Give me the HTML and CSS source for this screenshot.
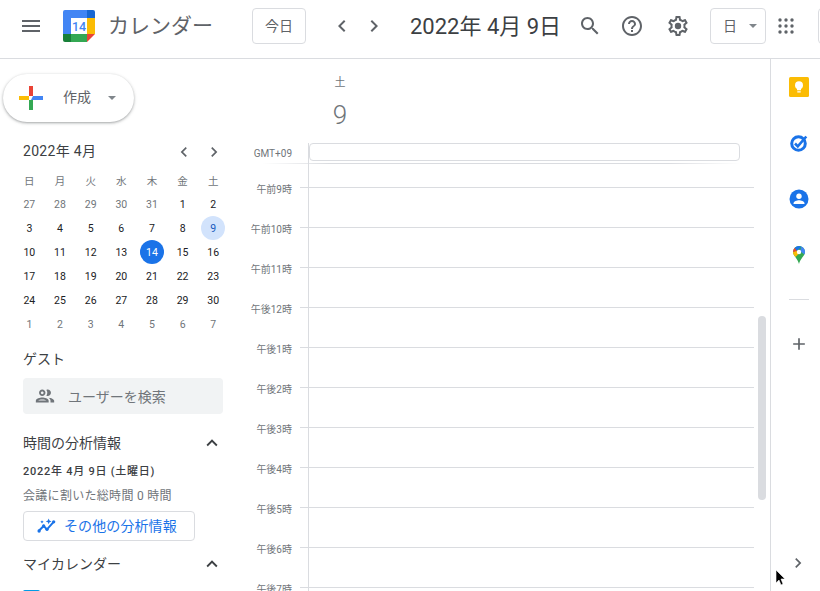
FILE: index.html
```html
<!DOCTYPE html>
<html lang="ja">
<head>
  <meta charset="UTF-8" />
  <title>カレンダー</title>
  <link rel="stylesheet" href="styles.css">
</head>
<body>

<header class="topbar">
  <svg class="icon menu-icon" viewBox="0 0 24 24"><path d="M3 18h18v-2H3v2zm0-5h18v-2H3v2zm0-7v2h18V6H3z"/></svg>
  <svg class="logo" viewBox="0 0 32 32">
    <path fill="#4285f4" d="M2 0h22v8H8v16H0V2a2 2 0 0 1 2-2z"/>
    <path fill="#1967d2" d="M24 0h6a2 2 0 0 1 2 2v6h-8z"/>
    <path fill="#fbbc04" d="M24 8h8v16h-8z"/>
    <path fill="#34a853" d="M8 24h16v8H8z"/>
    <path fill="#188038" d="M0 24h8v8H2a2 2 0 0 1-2-2z"/>
    <path fill="#ea4335" d="M24 24h8l-8 8z"/>
    <rect fill="#fff" x="8" y="8" width="16" height="16"/>
    <text class="logo-num" x="16" y="21">14</text>
  </svg>
  <span class="app-title">カレンダー</span>
  <button class="today-btn">今日</button>
  <svg class="icon nav-prev" viewBox="0 0 24 24"><path d="M15.41 7.41L14 6l-6 6 6 6 1.41-1.41L10.83 12z"/></svg>
  <svg class="icon nav-next" viewBox="0 0 24 24"><path d="M10 6L8.59 7.41 13.17 12l-4.58 4.59L10 18l6-6z"/></svg>
  <span class="date-title">2022年 4月 9日</span>
  <svg class="icon search-icon" viewBox="0 0 24 24"><path d="M15.5 14h-.79l-.28-.27C15.41 12.59 16 11.11 16 9.5 16 5.91 13.09 3 9.5 3S3 5.91 3 9.5 5.91 16 9.5 16c1.61 0 3.09-.59 4.23-1.57l.27.28v.79l5 4.99L20.49 19l-4.99-5zm-6 0C7.01 14 5 11.99 5 9.5S7.01 5 9.5 5 14 7.01 14 9.5 11.99 14 9.5 14z"/></svg>
  <svg class="icon help-icon" viewBox="0 0 24 24"><path d="M11 18h2v-2h-2v2zm1-16C6.48 2 2 6.48 2 12s4.48 10 10 10 10-4.48 10-10S17.52 2 12 2zm0 18c-4.41 0-8-3.59-8-8s3.59-8 8-8 8 3.59 8 8-3.59 8-8 8zm0-14c-2.21 0-4 1.79-4 4h2c0-1.1.9-2 2-2s2 .9 2 2c0 2-3 1.75-3 5h2c0-2.25 3-2.5 3-5 0-2.21-1.79-4-4-4z"/></svg>
  <svg class="icon gear-icon" viewBox="0 0 24 24"><path d="M19.43 12.98c.04-.32.07-.64.07-.98 0-.34-.03-.66-.07-.98l2.11-1.65c.19-.15.24-.42.12-.64l-2-3.46c-.09-.16-.26-.25-.44-.25-.06 0-.12.01-.17.03l-2.49 1c-.52-.4-1.08-.73-1.69-.98l-.38-2.65C14.46 2.18 14.25 2 14 2h-4c-.25 0-.46.18-.49.42l-.38 2.65c-.61.25-1.17.59-1.69.98l-2.49-1c-.06-.02-.12-.03-.18-.03-.17 0-.34.09-.43.25l-2 3.46c-.13.22-.07.49.12.64l2.11 1.65c-.04.32-.07.65-.07.98 0 .33.03.66.07.98l-2.11 1.65c-.19.15-.24.42-.12.64l2 3.46c.09.16.26.25.44.25.06 0 .12-.01.17-.03l2.49-1c.52.4 1.08.73 1.69.98l.38 2.65c.03.24.24.42.49.42h4c.25 0 .46-.18.49-.42l.38-2.65c.61-.25 1.17-.59 1.69-.98l2.49 1c.06.02.12.03.18.03.17 0 .34-.09.43-.25l2-3.46c.12-.22.07-.49-.12-.64l-2.11-1.65zm-1.98-1.71c.04.31.05.52.05.73 0 .21-.02.43-.05.73l-.14 1.13.89.7 1.08.84-.7 1.21-1.27-.51-1.04-.42-.9.68c-.43.32-.84.56-1.25.73l-1.06.43-.16 1.13-.2 1.35h-1.4l-.19-1.35-.16-1.13-1.06-.43c-.43-.18-.83-.41-1.23-.71l-.91-.7-1.06.43-1.27.51-.7-1.21 1.08-.84.89-.7-.14-1.13c-.03-.31-.05-.54-.05-.74s.02-.43.05-.73l.14-1.13-.89-.7-1.08-.84.7-1.21 1.27.51 1.04.42.9-.68c.43-.32.84-.56 1.25-.73l1.06-.43.16-1.13.2-1.35h1.39l.19 1.35.16 1.13 1.06.43c.43.18.83.41 1.23.71l.91.7 1.06-.43 1.27-.51.7 1.21-1.07.85-.89.7.14 1.13z"/><circle cx="12" cy="12" r="3.2"/></svg>
  <div class="view-btn"><span>日</span><i class="caret"></i></div>
  <svg class="apps-icon" viewBox="0 0 16 16">
    <circle cx="2" cy="2" r="1.7"/><circle cx="8" cy="2" r="1.7"/><circle cx="14" cy="2" r="1.7"/>
    <circle cx="2" cy="8" r="1.7"/><circle cx="8" cy="8" r="1.7"/><circle cx="14" cy="8" r="1.7"/>
    <circle cx="2" cy="14" r="1.7"/><circle cx="8" cy="14" r="1.7"/><circle cx="14" cy="14" r="1.7"/>
  </svg>
  <div class="account-edge"></div>
</header>

<div class="main">
  <aside class="sidebar">
    <button class="create-btn">
      <svg class="create-plus" viewBox="0 0 24 24">
        <path fill="#ea4335" d="M10 0h4v10h-4z"/>
        <path fill="#4285f4" d="M14 10h10v4H12z"/>
        <path fill="#34a853" d="M10 14h4v10h-4z"/>
        <path fill="#fbbc04" d="M0 10h10v4H0z"/>
      </svg>
      <span>作成</span>
      <i class="caret"></i>
    </button>

    <div class="mini-head">
      <span class="mini-title">2022年 4月</span>
      <svg class="icon mini-prev" viewBox="0 0 24 24"><path d="M15.41 7.41L14 6l-6 6 6 6 1.41-1.41L10.83 12z"/></svg>
      <svg class="icon mini-next" viewBox="0 0 24 24"><path d="M10 6L8.59 7.41 13.17 12l-4.58 4.59L10 18l6-6z"/></svg>
    </div>
    <div class="mini-cal" id="miniCal"></div>

    <div class="section-title guest-title"><span>ゲスト</span></div>
    <div class="guest-search">
      <svg class="icon people-icon" viewBox="0 0 24 24"><path d="M9 13.75c-2.34 0-7 1.17-7 3.5V19h14v-1.75c0-2.33-4.66-3.5-7-3.5zM4.34 17c.84-.58 2.87-1.25 4.66-1.25s3.82.67 4.66 1.25H4.34zM9 12c1.93 0 3.5-1.57 3.5-3.5S10.93 5 9 5 5.5 6.57 5.5 8.5 7.07 12 9 12zm0-5c.83 0 1.5.67 1.5 1.5S9.83 10 9 10s-1.5-.67-1.5-1.5S8.17 7 9 7zm7.04 6.81c1.16.84 1.96 1.96 1.96 3.44V19h4v-1.75c0-2.02-3.5-3.17-5.96-3.44zM15 12c1.93 0 3.5-1.57 3.5-3.5S16.93 5 15 5c-.54 0-1.04.13-1.5.35.63.89 1 1.98 1 3.15s-.37 2.26-1 3.15c.46.22.96.35 1.5.35z"/></svg>
      <span>ユーザーを検索</span>
    </div>

    <div class="section-title insight-title">
      <span>時間の分析情報</span>
      <svg class="icon expand-icon" viewBox="0 0 24 24"><path d="M12 8l-6 6 1.41 1.41L12 10.83l4.59 4.58L18 14z"/></svg>
    </div>
    <div class="insight-date">2022年 4月 9日 (土曜日)</div>
    <div class="insight-note">会議に割いた総時間 0 時間</div>
    <button class="insight-btn">
      <svg class="insight-icon" viewBox="0 0 24 24">
        <path fill="none" stroke="#1a73e8" stroke-width="2.4" d="M2 18l6-6 4 4 8-9"/>
        <circle fill="#1a73e8" cx="2.5" cy="18" r="2"/><circle fill="#1a73e8" cx="8" cy="12" r="2"/><circle fill="#1a73e8" cx="12" cy="16" r="2"/><circle fill="#1a73e8" cx="20" cy="7" r="2"/>
        <path fill="#1a73e8" d="M14 3l1 2.5L17.500 6.500 15 7.500 14 10 13 7.500 10.500 6.500 13 5.500zM6 5l.7 1.300L8 7l-1.300.7L6 9l-.7-1.300L4 7l1.300-.7z"/>
      </svg>
      <span>その他の分析情報</span>
    </button>

    <div class="section-title mycal-title">
      <span>マイカレンダー</span>
      <svg class="icon expand-icon" viewBox="0 0 24 24"><path d="M12 8l-6 6 1.41 1.41L12 10.83l4.59 4.58L18 14z"/></svg>
    </div>
    <div class="cal-check"></div>
  </aside>

  <section class="day-view">
    <div class="day-head">
      <div class="day-name">土</div>
      <div class="day-num">9</div>
    </div>
    <div class="allday-row">
      <span class="tz">GMT+09</span>
      <div class="allday-box"></div>
    </div>
    <div class="allday-rule"></div>
    <div class="hours" id="hours"></div>
    <div class="day-vline"></div>
    <div class="scroll-thumb"></div>
  </section>

  <aside class="side-panel">
    <svg class="panel-icon" viewBox="0 0 20 20">
      <rect fill="#fbbc04" width="20" height="20" rx="1.500"/>
      <circle fill="#fff" cx="10" cy="8.300" r="4"/>
      <path fill="#fff" d="M8 11h4v2.300H8zM8.300 14.300h3.400v1.200H8.300z"/>
    </svg>
    <svg class="panel-icon" viewBox="0 0 20 20">
      <circle fill="none" stroke="#1a73e8" stroke-width="3" cx="9.500" cy="10.500" r="6.800"/>
      <path fill="none" stroke="#1a73e8" stroke-width="2.600" d="M6 10.500l2.800 2.800 8.500-9.800"/>
    </svg>
    <svg class="panel-icon" viewBox="0 0 20 20">
      <circle fill="#1a73e8" cx="10" cy="10" r="9.500"/>
      <circle fill="#fff" cx="10" cy="7.300" r="2.700"/>
      <path fill="#fff" d="M4.500 14.500c0-2.200 3.500-3.300 5.500-3.300s5.500 1.100 5.500 3.300v.6h-11z"/>
    </svg>
    <svg class="panel-icon" viewBox="0 0 20 20">
      <path fill="#34a853" d="M10 1a6 6 0 0 1 6 6c0 4-4.500 6-6 12-1.500-6-6-8-6-12a6 6 0 0 1 6-6z"/>
      <path fill="#fbbc04" d="M4 7c0 2 1.200 3.500 2.500 5L12 6.500 7 5.500z"/>
      <path fill="#ea4335" d="M5.800 2.700A6 6 0 0 0 4 7l4-1z"/>
      <path fill="#1a73e8" d="M5.800 2.700A6 6 0 0 1 10 1a6 6 0 0 1 2.500.5L8 6z"/>
      <path fill="#4285f4" d="M12.500 1.500A6 6 0 0 1 16 7c0 1-.3 1.800-.7 2.500L11 6z"/>
      <circle fill="#fff" cx="10" cy="7" r="2.200"/>
    </svg>
    <div class="panel-sep"></div>
    <svg class="icon panel-add" viewBox="0 0 24 24"><path d="M19 13h-6v6h-2v-6H5v-2h6V5h2v6h6v2z"/></svg>
    <svg class="icon panel-toggle" viewBox="0 0 24 24"><path d="M10 6L8.59 7.41 13.17 12l-4.58 4.59L10 18l6-6z"/></svg>
  </aside>
</div>

<svg class="cursor" viewBox="0 0 12 18"><path fill="#000" stroke="#fff" stroke-width="0.600" d="M1 1v13l3-3 2 5 2-1-2-5h4z"/></svg>

<script>
  // mini month, rows of 7 starting on Sunday
  const days = [27,28,29,30,31,1,2,3,4,5,6,7,8,9,10,11,12,13,14,15,16,17,18,19,20,21,22,23,24,25,26,27,28,29,30,1,2,3,4,5,6,7];
  const cal = document.getElementById("miniCal");
  "日月火水木金土".split("").forEach(function(d) {
    const el = document.createElement("div");
    el.className = "mini-cell mini-dow";
    el.textContent = d;
    cal.appendChild(el);
  });
  days.forEach(function(d, i) {
    const el = document.createElement("div");
    el.className = "mini-cell";
    if (i < 5 || i >= 35) el.classList.add("muted");
    const n = document.createElement("span");
    n.textContent = d;
    if (i === 13) n.className = "selected";
    if (i === 18) n.className = "today";
    el.appendChild(n);
    cal.appendChild(el);
  });

  const hours = ["午前9時","午前10時","午前11時","午後12時","午後1時","午後2時","午後3時","午後4時","午後5時","午後6時","午後7時"];
  const wrap = document.getElementById("hours");
  hours.forEach(function(h) {
    const row = document.createElement("div");
    row.className = "hour-row";
    row.innerHTML = '<span class="hour-label">' + h + '</span><div class="hour-line"></div>';
    wrap.appendChild(row);
  });
</script>

</body>
</html>
```

FILE: styles.css
```css
* {
  box-sizing: border-box;
}
html, body {
  height: 100%;
}
body {
  margin: 0;
  height: 591px;
  overflow: hidden;
  background: #fff;
  color: #3c4043;
  font-family: Roboto, "Noto Sans CJK JP", sans-serif;
}
button {
  font-family: inherit;
  background: #fff;
  cursor: pointer;
}
.icon {
  display: block;
  width: 24px;
  height: 24px;
  flex: none;
  fill: #5f6368;
}
.caret {
  display: block;
  flex: none;
  width: 0;
  height: 0;
  border-left: 4px solid transparent;
  border-right: 4px solid transparent;
  border-top: 4px solid #80868b;
}

/* top bar */
.topbar {
  display: flex;
  align-items: center;
  height: 59px;
  padding: 0 0 7px 19px;
  border-bottom: 1px solid #dadce0;
  overflow: hidden;
}
.logo {
  display: block;
  flex: none;
  width: 32px;
  height: 32px;
  margin-left: 20px;
}
.logo-num {
  font-size: 12.500px;
  font-weight: 500;
  fill: #4285f4;
  text-anchor: middle;
}
.app-title {
  margin-left: 13px;
  padding-bottom: 4px;
  width: 144px;
  flex: none;
  font-size: 21px;
  color: #5f6368;
  white-space: nowrap;
}
.today-btn {
  flex: none;
  width: 54px;
  height: 36px;
  padding: 0 0 2px;
  border: 1px solid #dadce0;
  border-radius: 4px;
  font-size: 14px;
  color: #5f6368;
}
.nav-prev {
  margin-left: 24px;
}
.nav-next {
  margin-left: 8px;
}
.date-title {
  flex: none;
  width: 168px;
  margin-left: 24px;
  padding-bottom: 4px;
  font-size: 22px;
  color: #3c4043;
  white-space: nowrap;
}
.help-icon {
  margin-left: 18px;
}
.gear-icon {
  margin-left: 22px;
}
.view-btn {
  display: flex;
  align-items: center;
  flex: none;
  width: 56px;
  height: 36px;
  margin-left: 20px;
  padding: 0 8px 0 12px;
  justify-content: space-between;
  border: 1px solid #dadce0;
  border-radius: 4px;
  font-size: 14px;
  color: #5f6368;
}
.view-btn span {
  padding-bottom: 2px;
}
.apps-icon {
  display: block;
  flex: none;
  width: 16px;
  height: 16px;
  margin-left: 12px;
  fill: #5f6368;
}
.account-edge {
  flex: none;
  width: 20px;
  height: 36px;
  margin-left: 24px;
  border: 1px solid #dadce0;
  border-radius: 4px;
}

.main {
  display: flex;
  height: 532px;
}

/* left column */
.sidebar {
  flex: none;
  width: 238px;
  padding-left: 23px;
  overflow: hidden;
}
.create-btn {
  display: flex;
  align-items: center;
  width: 131px;
  height: 48px;
  margin: 15px 0 0 -20px;
  padding: 0 0 0 16px;
  border: none;
  border-radius: 24px;
  box-shadow: 0 1px 2px 0 rgba(60,64,67,.3), 0 1px 3px 1px rgba(60,64,67,.15);
  font-size: 14px;
  color: #3c4043;
}
.create-plus {
  display: block;
  flex: none;
  width: 24px;
  height: 24px;
}
.create-btn span {
  margin-left: 20px;
  padding-bottom: 4px;
  color: #5f6368;
}
.create-btn .caret {
  margin-left: 17px;
}
.mini-head {
  display: flex;
  align-items: center;
  height: 24px;
  margin-top: 18px;
}
.mini-title {
  flex: none;
  width: 151px;
  padding-bottom: 4px;
  font-size: 14px;
  letter-spacing: .3px;
  color: #3c4043;
}
.mini-head .icon {
  width: 20px;
  height: 20px;
}
.mini-next {
  margin-left: 10px;
}
.mini-cal {
  display: grid;
  grid-template-columns: repeat(7, 30.67px);
  grid-auto-rows: 24px;
  margin: 4px 0 0 -9px;
}
.mini-cell {
  display: flex;
  align-items: center;
  justify-content: center;
  font-size: 10.500px;
  font-weight: 400;
  color: #202124;
}
.mini-cell span {
  display: flex;
  align-items: center;
  justify-content: center;
  width: 24px;
  height: 24px;
  border-radius: 50%;
}
.mini-dow {
  color: #70757a;
}
.muted {
  color: #70757a;
}
.selected {
  background: #d2e3fc;
  color: #185abc;
}
.today {
  background: #1a73e8;
  color: #fff;
}
.section-title {
  display: flex;
  align-items: center;
  justify-content: space-between;
  width: 200px;
  height: 20px;
  font-size: 14px;
  color: #3c4043;
}
.section-title span {
  padding-bottom: 2px;
}
.guest-title {
  margin-top: 13px;
}
.guest-search {
  display: flex;
  align-items: center;
  width: 200px;
  height: 36px;
  margin-top: 9px;
  padding-left: 11px;
  background: #f1f3f4;
  border-radius: 4px;
  font-size: 14px;
  color: #70757a;
}
.people-icon {
  width: 22px;
  height: 22px;
  fill: #70757a;
}
.guest-search span {
  margin-left: 12px;
}
.insight-title {
  margin-top: 19px;
}
.expand-icon {
  width: 22px;
  height: 22px;
  fill: #3c4043;
}
.insight-date {
  margin-top: 11px;
  font-size: 11px;
  font-weight: 500;
  letter-spacing: .75px;
  line-height: 16px;
  color: #3c4043;
}
.insight-note {
  margin-top: 8px;
  font-size: 12px;
  letter-spacing: .3px;
  line-height: 16px;
  color: #70757a;
}
.insight-btn {
  display: flex;
  align-items: center;
  width: 172px;
  height: 30px;
  margin-top: 7px;
  padding: 0 0 0 13px;
  border: 1px solid #dadce0;
  border-radius: 4px;
  font-size: 14px;
  letter-spacing: .1px;
  color: #1a73e8;
}
.insight-icon {
  display: block;
  flex: none;
  width: 20px;
  height: 20px;
}
.insight-btn span {
  margin-left: 7px;
  padding-bottom: 2px;
}
.mycal-title {
  margin-top: 13px;
}
.cal-check {
  width: 17px;
  height: 17px;
  margin-top: 16px;
  background: #039be5;
  border-radius: 2px;
}

/* day grid */
.day-view {
  position: relative;
  flex: 1;
  overflow: hidden;
}
.day-head {
  width: 64px;
  margin-left: 70px;
  text-align: center;
  color: #70757a;
}
.day-name {
  padding-top: 16px;
  font-size: 11px;
  line-height: 16px;
}
.day-num {
  margin-top: 9px;
  font-size: 26px;
  font-weight: 300;
  line-height: 30px;
}
.allday-row {
  display: flex;
  align-items: center;
  height: 18px;
  margin-top: 13px;
}
.tz {
  flex: none;
  width: 54px;
  padding-top: 2px;
  font-size: 10px;
  color: #70757a;
  text-align: right;
}
.allday-box {
  width: 431px;
  height: 18px;
  margin-left: 17px;
  border: 1px solid #dadce0;
  border-radius: 4px;
}
.allday-rule {
  height: 1px;
  margin: 2px 30px 0 24px;
  background: linear-gradient(to right, #fff, #dadce0 14%, #dadce0 85%, #fff);
}
.hours {
  padding-top: 23px;
}
.hour-row {
  display: flex;
  height: 40px;
}
.hour-label {
  flex: none;
  width: 54px;
  margin-top: -4px;
  height: 14px;
  font-size: 10px;
  line-height: 14px;
  color: #70757a;
  text-align: right;
  white-space: nowrap;
}
.hour-line {
  flex: none;
  width: 454px;
  height: 1px;
  margin-left: 8px;
  background: #dadce0;
}
.day-vline {
  position: absolute;
  left: 70px;
  top: 84px;
  bottom: 0;
  width: 1px;
  background: #dadce0;
}
.scroll-thumb {
  position: absolute;
  left: 520px;
  top: 257px;
  width: 8px;
  height: 184px;
  background: #dadce0;
  border-radius: 4px;
}

/* right panel */
.side-panel {
  position: relative;
  display: flex;
  flex-direction: column;
  align-items: center;
  flex: none;
  width: 50px;
  padding: 18px 0 0 6px;
  border-left: 1px solid #dadce0;
}
.panel-icon {
  display: block;
  flex: none;
  width: 20px;
  height: 20px;
  margin-bottom: 36px;
}
.panel-sep {
  width: 20px;
  height: 1px;
  margin-top: -2px;
  background: #dadce0;
}
.panel-add {
  width: 20px;
  height: 20px;
  margin-top: 34px;
}
.panel-toggle {
  position: absolute;
  left: 17px;
  bottom: 18px;
  width: 20px;
  height: 20px;
}

.cursor {
  position: absolute;
  left: 775px;
  top: 569px;
  width: 12px;
  height: 18px;
}
```
